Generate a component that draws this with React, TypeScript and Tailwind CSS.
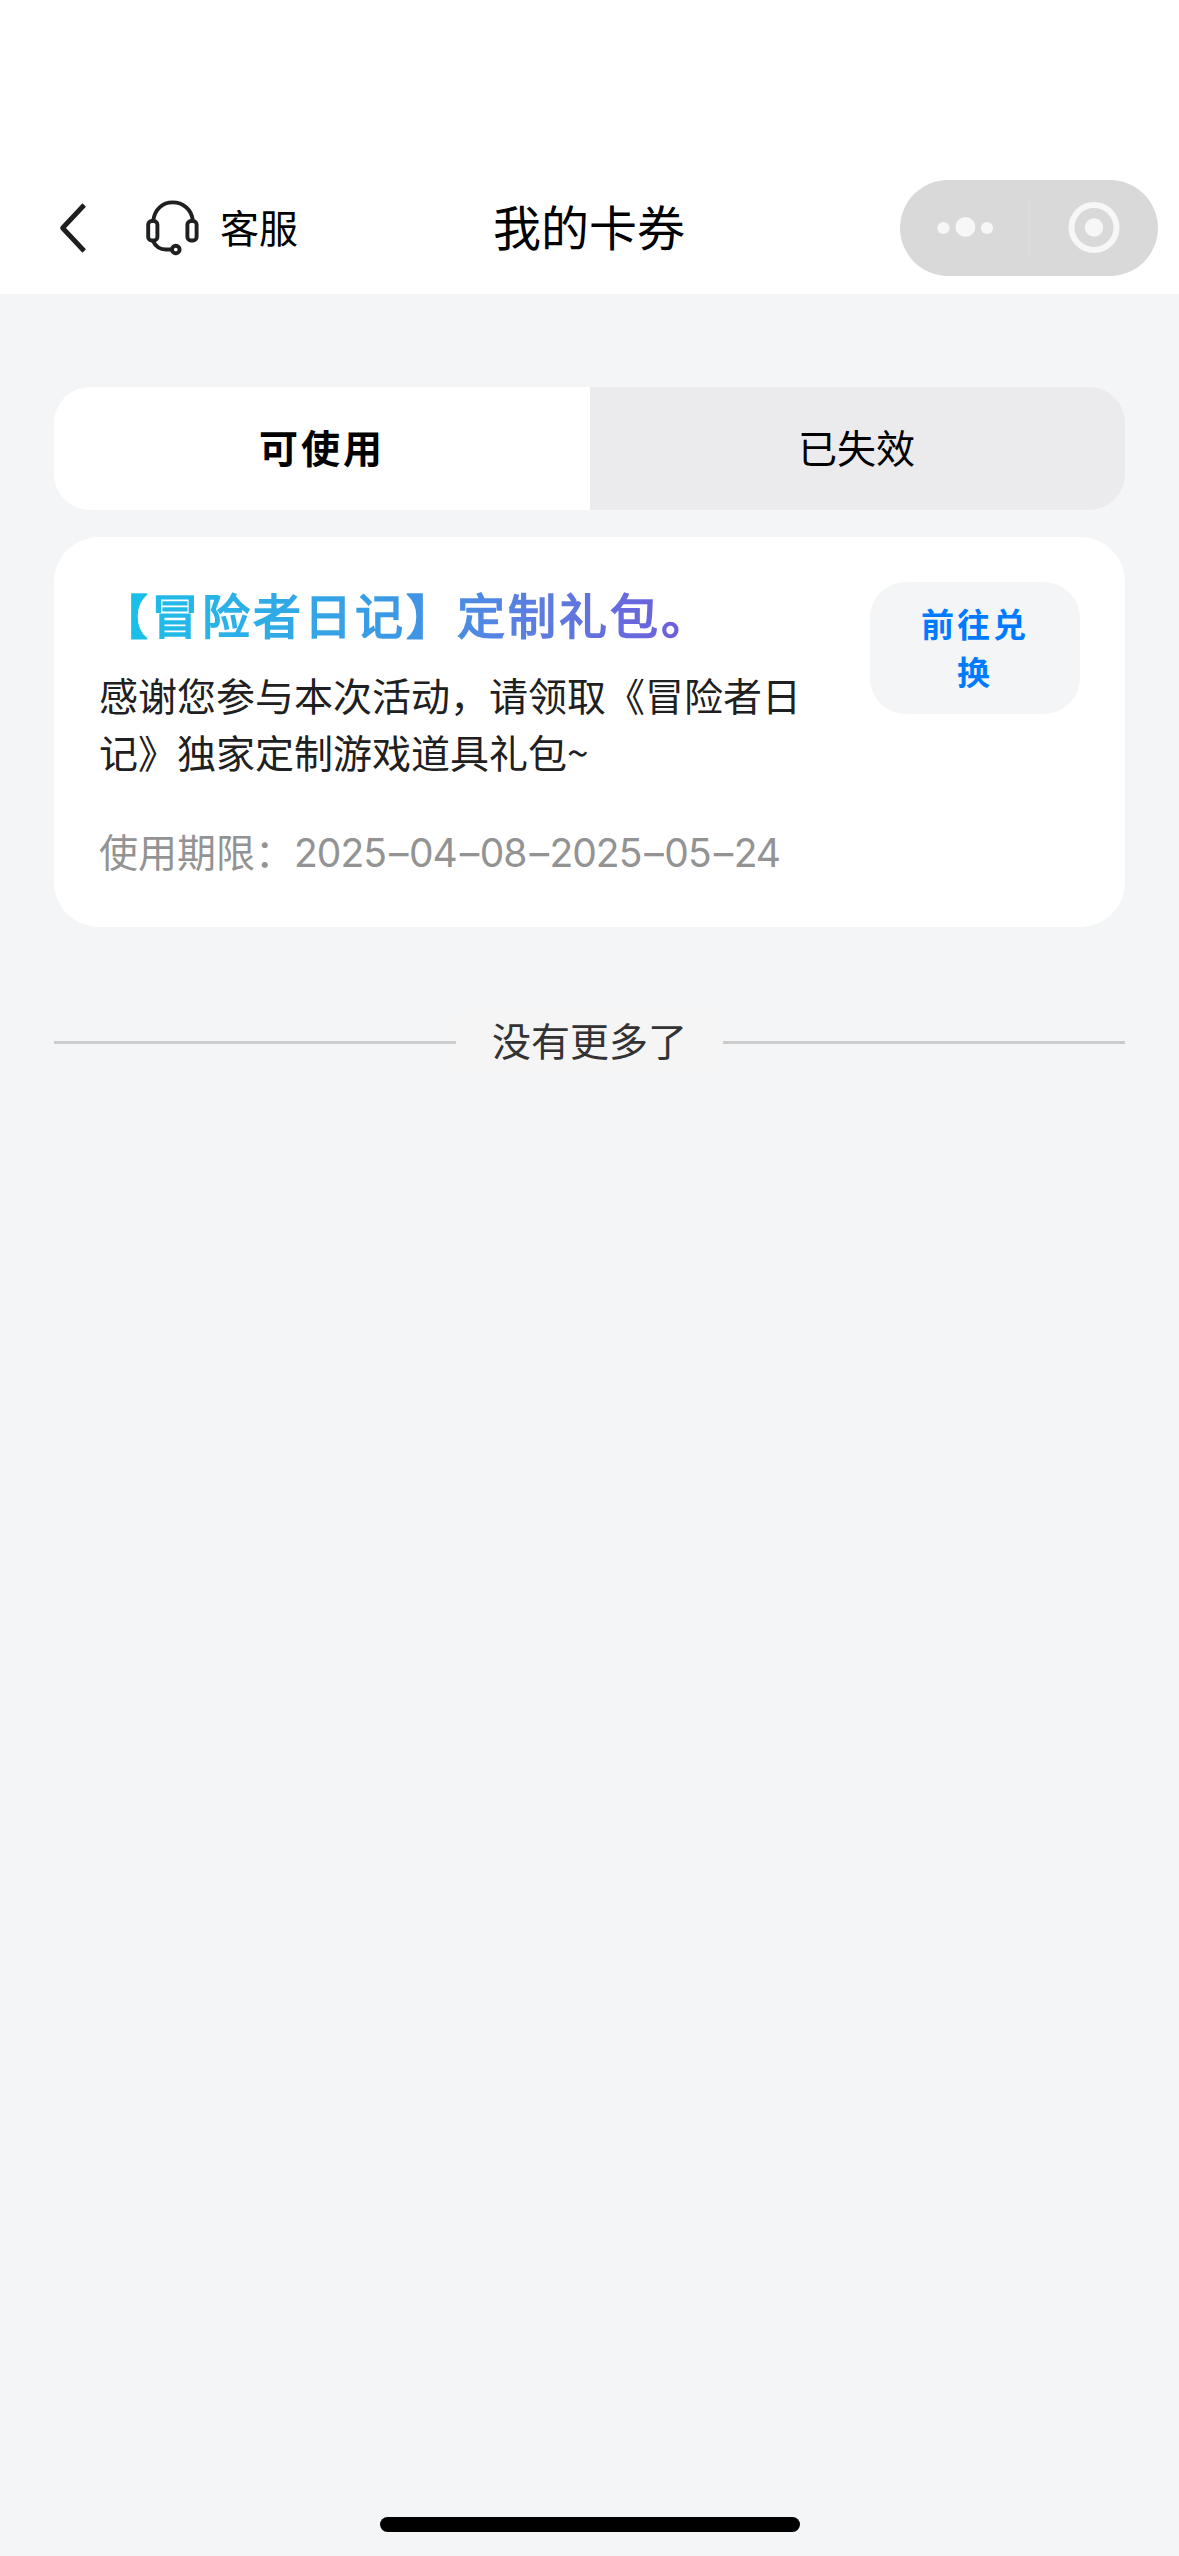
import React from "react";

function BackIcon() {
  return (
    <svg width="28" height="52" viewBox="0 0 28 52" fill="none" stroke="#1c1e20" strokeWidth="4.8">
      <path d="M25.2 3 L3.6 26 L25.2 49" strokeLinejoin="round" />
    </svg>
  );
}

function HeadsetIcon() {
  return (
    <svg width="56" height="58" viewBox="0 0 56 58" fill="none" stroke="#1f2021" strokeWidth="3.9">
      <path d="M8.3 21.5 C9.5 10.5 17.5 3.4 27.7 3.4 C37.9 3.4 46.6 10.5 47.8 21.5" />
      <rect x="3.2" y="22" width="9.2" height="19.5" rx="3.6" />
      <rect x="42.4" y="22" width="9.2" height="19.5" rx="3.6" />
      <path d="M8 42 C10.5 47.5 15 50.5 21 50.5 L27 50.5" />
      <circle cx="30.8" cy="50.5" r="3.8" />
    </svg>
  );
}

function Capsule() {
  return (
    <div className="flex h-24 w-[258px] items-center rounded-full bg-[#d9d9d9]">
      <svg width="258" height="96" viewBox="0 0 258 96" fill="#f7f7f7">
        <circle cx="43.5" cy="48" r="6.1" />
        <circle cx="65.4" cy="47" r="10" />
        <circle cx="87" cy="48" r="6.1" />
        <rect x="129" y="17" width="1" height="62" fill="#dedede" />
        <circle cx="194" cy="47.5" r="22.5" fill="none" stroke="#f7f7f7" strokeWidth="6" />
        <circle cx="194" cy="47.5" r="9.2" />
      </svg>
    </div>
  );
}

function Header() {
  return (
    <header className="grid h-[294px] grid-cols-[1fr_auto_1fr] bg-white pt-[162px] text-black">
      <div className="flex h-[132px] items-center pl-[59px]">
        <BackIcon />
        <div className="ml-[58px] flex items-center gap-[19px]">
          <HeadsetIcon />
          <span className="pb-1 text-[39px] leading-[60px]">客服</span>
        </div>
      </div>
      <h1 className="flex h-[132px] items-center pr-px pb-1.5 text-[48px] leading-[66px]">我的卡券</h1>
      <div className="flex h-[132px] items-center justify-end pr-[21px]">
        <Capsule />
      </div>
    </header>
  );
}

function Tabs() {
  return (
    <div className="flex h-[123px] overflow-hidden rounded-[36px] text-[39px] text-black">
      <button className="w-[536px] bg-white pb-1 font-bold tracking-[3px]">可使用</button>
      <button className="flex-1 bg-[#ebebed] pr-0.5 pb-1">已失效</button>
    </div>
  );
}

const validity = ["2025", "04", "08", "2025", "05", "24"];

function CouponCard() {
  return (
    <section className="mt-[27px] flex h-[390px] items-start justify-between rounded-[45px] bg-white px-[45px] pt-[45px]">
      <div className="-mt-0.5 w-[735px]">
        <h2 className="w-[612px] bg-linear-to-r from-[#0cc4e8] via-[#3c97e5] to-[#6f57da] bg-clip-text pl-px text-[48px] leading-[66px] tracking-[3px] whitespace-nowrap text-transparent [-webkit-text-stroke:1.7px_transparent]">
          【冒险者日记】定制礼包。
        </h2>
        <p className="mt-5 w-[705px] text-[39px] leading-[57px] text-[#1e2021]">
          感谢您参与本次活动，请领取《冒险者日记》独家定制游戏道具礼包~
        </p>
        <p className="mt-[42px] flex text-[39px] leading-[57px] whitespace-nowrap text-[#939393]">
          <span>使用期限：</span>
          <span className="pt-0.5 font-['Inter'] tracking-[-1px]">
            {validity.map((part, i) => (
              <React.Fragment key={i}>
                {i > 0 && <span className="mr-[1.5px] ml-[3px]">–</span>}
                {part}
              </React.Fragment>
            ))}
          </span>
        </p>
      </div>
      <button className="w-[210px] rounded-[36px] bg-[#f4f5f7] px-[42px] pt-[17px] pb-[19px] text-[33px] leading-[48px] font-bold tracking-[3px] text-[#007bff]">
        前往兑换
      </button>
    </section>
  );
}

function EndOfList() {
  return (
    <div className="mt-[85px] flex items-center">
      <div className="h-[3px] flex-1 bg-[#ccc]" />
      <span className="bg-[#f5f5f5] px-9 pb-1.5 text-[39px] leading-[54px] text-[#333]">没有更多了</span>
      <div className="h-[3px] flex-1 bg-[#ccc]" />
    </div>
  );
}

export default function App() {
  return (
    <div className="flex h-[2556px] w-[1179px] flex-col bg-[#f4f5f7] font-['Noto_Sans_CJK_SC',sans-serif]">
      <Header />
      <main className="flex-1 px-[54px] pt-[93px]">
        <Tabs />
        <CouponCard />
        <EndOfList />
      </main>
      <div className="mb-6 h-[15px] w-[420px] self-center rounded-full bg-black" />
    </div>
  );
}
